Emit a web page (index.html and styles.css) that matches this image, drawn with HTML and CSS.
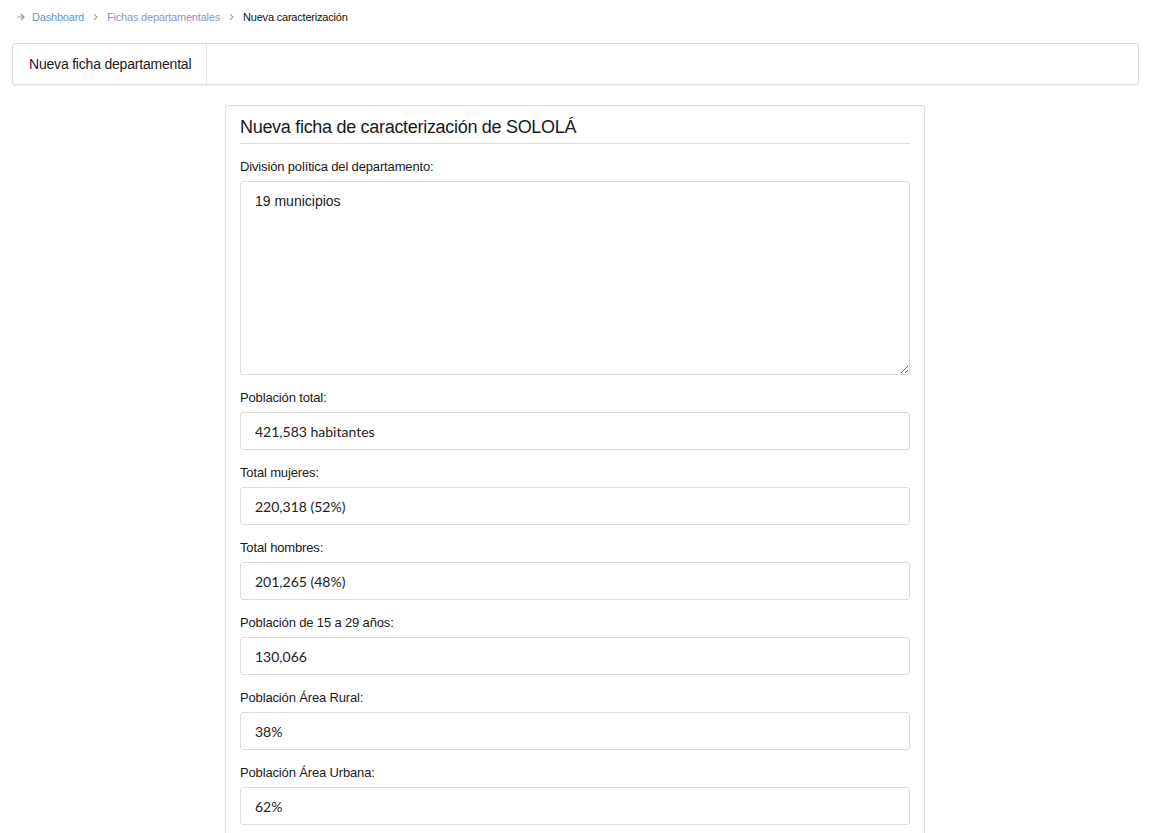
FILE: index.html
```html
<!DOCTYPE html>
<html lang="es">
<head>
<meta charset="utf-8">
<title>Nueva caracterización</title>
<link rel="stylesheet" href="styles.css">
</head>
<body>
<nav class="crumbs">
  <svg class="crumb-arrow" width="10" height="10" viewBox="0 0 10 10"><path d="M1 5h7M5 2l3 3-3 3" fill="none" stroke="#999" stroke-width="1.2"/></svg>
  <a class="crumb-link" href="#">Dashboard</a>
  <svg class="crumb-sep" width="8" height="10" viewBox="0 0 8 10"><path d="M2 2l3 3-3 3" fill="none" stroke="#aaa" stroke-width="1.2"/></svg>
  <a class="crumb-link visited" href="#">Fichas departamentales</a>
  <svg class="crumb-sep" width="8" height="10" viewBox="0 0 8 10"><path d="M2 2l3 3-3 3" fill="none" stroke="#aaa" stroke-width="1.2"/></svg>
  <span class="crumb-current">Nueva caracterización</span>
</nav>

<div class="topbar">
  <div class="topbar-title">Nueva ficha departamental</div>
</div>

<main class="wrap">
  <section class="card">
    <h2 class="card-title">Nueva ficha de caracterización de SOLOLÁ</h2>
    <div class="field">
      <label class="lbl">División política del departamento:</label>
      <textarea class="area">19 municipios</textarea>
    </div>
    <div class="field">
      <label class="lbl">Población total:</label>
      <input class="inp" type="text" value="421,583 habitantes">
    </div>
    <div class="field">
      <label class="lbl">Total mujeres:</label>
      <input class="inp" type="text" value="220,318 (52%)">
    </div>
    <div class="field">
      <label class="lbl">Total hombres:</label>
      <input class="inp" type="text" value="201,265 (48%)">
    </div>
    <div class="field">
      <label class="lbl">Población de 15 a 29 años:</label>
      <input class="inp" type="text" value="130,066">
    </div>
    <div class="field">
      <label class="lbl">Población Área Rural:</label>
      <input class="inp" type="text" value="38%">
    </div>
    <div class="field">
      <label class="lbl">Población Área Urbana:</label>
      <input class="inp" type="text" value="62%">
    </div>
  </section>
</main>
</body>
</html>
```

FILE: styles.css
```css
html, body {
  margin: 0;
  padding: 0;
  background: #fff;
}
body {
  font-family: "Liberation Sans", Arial, sans-serif;
  color: #222;
  overflow: hidden;
  height: 833px;
}
.crumbs {
  display: flex;
  align-items: center;
  height: 34px;
  padding-left: 16px;
  font-size: 11px;
  letter-spacing: -0.2px;
}
.crumb-arrow {
  margin-right: 6px;
}
.crumb-link {
  color: #5b9bd5;
  text-decoration: none;
}
.crumb-link.visited {
  color: #9095c6;
}
.crumb-sep {
  margin: 0 7px 0 8px;
}
.crumb-current {
  color: #111;
}
.topbar {
  margin: 9px 35px 0 12px;
  height: 40px;
  border: 1px solid #ddd;
  border-radius: 3px;
  box-shadow: 0 1px 2px rgba(0,0,0,0.08);
  display: flex;
}
.topbar-title {
  padding: 0 15px 0 16px;
  border-right: 1px solid #e2e2e2;
  display: flex;
  align-items: center;
  font-size: 14px;
  color: #1a1a1a;
  letter-spacing: -0.2px;
}
.wrap {
  display: flex;
  justify-content: center;
  padding-top: 20px;
  padding-right: 24px;
}
.card {
  width: 670px;
  border: 1px solid #ddd;
  border-radius: 3px;
  padding: 0 14px 20px;
}
.card-title {
  margin: 0;
  padding: 11px 0 5px;
  border-bottom: 1px solid #ddd;
  font-weight: normal;
  font-size: 18px;
  letter-spacing: -0.3px;
  color: #1a1a1a;
}
.field {
  display: flex;
  flex-direction: column;
}
.lbl {
  font-size: 13px;
  color: #1a1a1a;
  letter-spacing: -0.15px;
  padding: 15px 0 7px;
  line-height: 15px;
}
.area {
  box-sizing: border-box;
  height: 194px;
  border: 1px solid #ddd;
  border-radius: 3px;
  padding: 11px 14px;
  font-family: "Liberation Sans", Arial, sans-serif;
  font-size: 14px;
  color: #222;
  resize: vertical;
  margin: 0;
}
.inp {
  box-sizing: border-box;
  height: 38px;
  border: 1px solid #ddd;
  border-radius: 3px;
  padding: 0 14px;
  font-family: Lato, sans-serif;
  font-size: 14px;
  color: #222;
  margin: 0;
}
```
